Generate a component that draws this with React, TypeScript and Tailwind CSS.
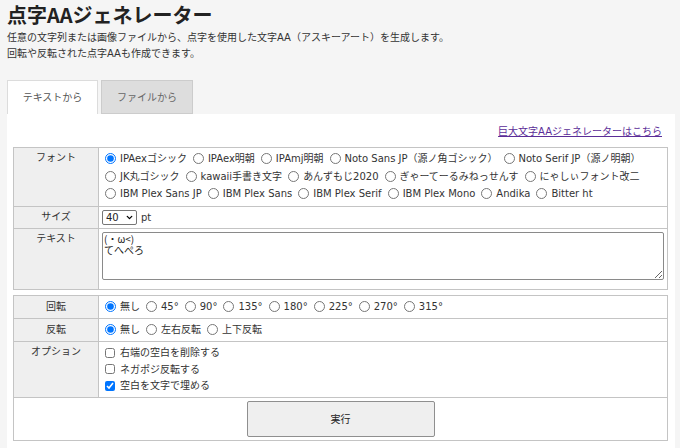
import { ChevronDown } from "lucide-react";

const fontLines: string[][] = [
  ["IPAexゴシック", "IPAex明朝", "IPAmj明朝", "Noto Sans JP（源ノ角ゴシック）", "Noto Serif JP（源ノ明朝）"],
  ["JK丸ゴシック", "kawaii手書き文字", "あんずもじ2020", "ぎゃーてーるみねっせんす", "にゃしぃフォント改二"],
  ["IBM Plex Sans JP", "IBM Plex Sans", "IBM Plex Serif", "IBM Plex Mono", "Andika", "Bitter ht"],
];

const rotations = ["無し", "45°", "90°", "135°", "180°", "225°", "270°", "315°"];
const flips = ["無し", "左右反転", "上下反転"];
const options = [
  { label: "右端の空白を削除する", checked: false },
  { label: "ネガポジ反転する", checked: false },
  { label: "空白を文字で埋める", checked: true },
];

function Radio({ name, label, checked }: { name: string; label: string; checked?: boolean }) {
  return (
    <label className="inline-flex items-center gap-[4px] ml-[6px] whitespace-nowrap">
      <input
        type="radio"
        name={name}
        defaultChecked={checked}
        className="m-0 w-[11px] h-[11px] accent-[#0075ff]"
      />
      <span>{label}</span>
    </label>
  );
}

function Label({ children, middle }: { children: React.ReactNode; middle?: boolean }) {
  return (
    <td
      className={
        "w-[85px] bg-[#efefef] border border-[#c4c4c4] text-center leading-[16px] " +
        (middle ? "align-middle" : "align-top pt-[2px]")
      }
    >
      {children}
    </td>
  );
}

export default function App() {
  return (
    <div className="min-h-screen bg-[#f5f5f5] pl-[7px] pr-[5px] text-[10px] text-[#333] font-['DejaVu_Sans','Noto_Sans_CJK_JP',sans-serif]">
      <h1 className="text-[20px] leading-[30px] font-bold text-[#222] font-['Noto_Sans_CJK_JP',sans-serif]">
        点字AAジェネレーター
      </h1>
      <p className="leading-[16px]">
        任意の文字列または画像ファイルから、点字を使用した文字AA（アスキーアート）を生成します。
        <br />
        回転や反転された点字AAも作成できます。
      </p>

      <div className="mt-[18px] flex gap-[3px]">
        <div className="w-[91px] h-[34px] bg-white border border-b-0 border-[#dcdcdc] flex items-center justify-center text-[#555]">
          テキストから
        </div>
        <div className="w-[92px] h-[34px] bg-[#dddddd] border border-[#cccccc] flex items-center justify-center text-[#666]">
          ファイルから
        </div>
      </div>

      <div className="bg-white pl-[6px] pr-[7px] pt-[10px] pb-6">
        <div className="text-right pr-[6px] leading-[16px]">
          <a href="#" className="underline text-[#5b2d98]">
            巨大文字AAジェネレーターはこちら
          </a>
        </div>

        <table className="mt-[7px] w-full border-collapse">
          <tbody>
            <tr>
              <Label>フォント</Label>
              <td className="border border-[#c4c4c4] pt-[2px] pb-[3px] pl-0">
                {fontLines.map((line, i) => (
                  <div key={i} className="flex items-center h-[17.5px]">
                    {line.map((f, j) => (
                      <Radio key={f} name="font" label={f} checked={i === 0 && j === 0} />
                    ))}
                  </div>
                ))}
              </td>
            </tr>
            <tr>
              <Label>サイズ</Label>
              <td className="border border-[#c4c4c4] py-[3px] pl-[3px]">
                <div className="flex items-center gap-[4px] h-[15px]">
                  <div className="relative w-[35px] h-[15px]">
                    <select className="appearance-none w-full h-full border border-[#767676] rounded-[2px] bg-white pl-[3px] leading-[13px] text-[#222]">
                      <option>40</option>
                    </select>
                    <ChevronDown
                      className="absolute right-[3px] top-[3px] w-[9px] h-[9px] text-black pointer-events-none"
                      strokeWidth={3.5}
                    />
                  </div>
                  <span>pt</span>
                </div>
              </td>
            </tr>
            <tr>
              <Label>テキスト</Label>
              <td className="border border-[#c4c4c4] pt-[3px] pb-[9px] px-[3px]">
                <textarea
                  className="block w-full h-[48px] border border-[#8a8a8a] rounded-[2px] px-[1px] pt-0 leading-[11px] text-[#222] font-['Noto_Sans_CJK_JP',monospace]"
                  defaultValue={"(・ω<)\nてへぺろ"}
                />
              </td>
            </tr>
          </tbody>
        </table>

        <table className="mt-[5px] w-full border-collapse">
          <tbody>
            <tr>
              <Label middle>回転</Label>
              <td className="border border-[#c4c4c4] py-[3px]">
                <div className="flex items-center h-[16px]">
                  {rotations.map((r, i) => (
                    <Radio key={r} name="rotate" label={r} checked={i === 0} />
                  ))}
                </div>
              </td>
            </tr>
            <tr>
              <Label middle>反転</Label>
              <td className="border border-[#c4c4c4] py-[3px]">
                <div className="flex items-center h-[16px]">
                  {flips.map((r, i) => (
                    <Radio key={r} name="flip" label={r} checked={i === 0} />
                  ))}
                </div>
              </td>
            </tr>
            <tr>
              <Label>オプション</Label>
              <td className="border border-[#c4c4c4] pt-[3px] pb-[3px]">
                {options.map((o) => (
                  <label key={o.label} className="flex items-center gap-[5px] pl-[6px] h-[16.5px]">
                    <input
                      type="checkbox"
                      defaultChecked={o.checked}
                      className="m-0 w-[10px] h-[10px] accent-[#0075ff]"
                    />
                    <span>{o.label}</span>
                  </label>
                ))}
              </td>
            </tr>
            <tr>
              <td colSpan={2} className="border border-[#c4c4c4] py-[3px] text-center">
                <button className="w-[188px] h-[36px] bg-[#efefef] border border-[#8f8f8f] rounded-[2px] text-[#222]">
                  実行
                </button>
              </td>
            </tr>
          </tbody>
        </table>
      </div>
    </div>
  );
}
